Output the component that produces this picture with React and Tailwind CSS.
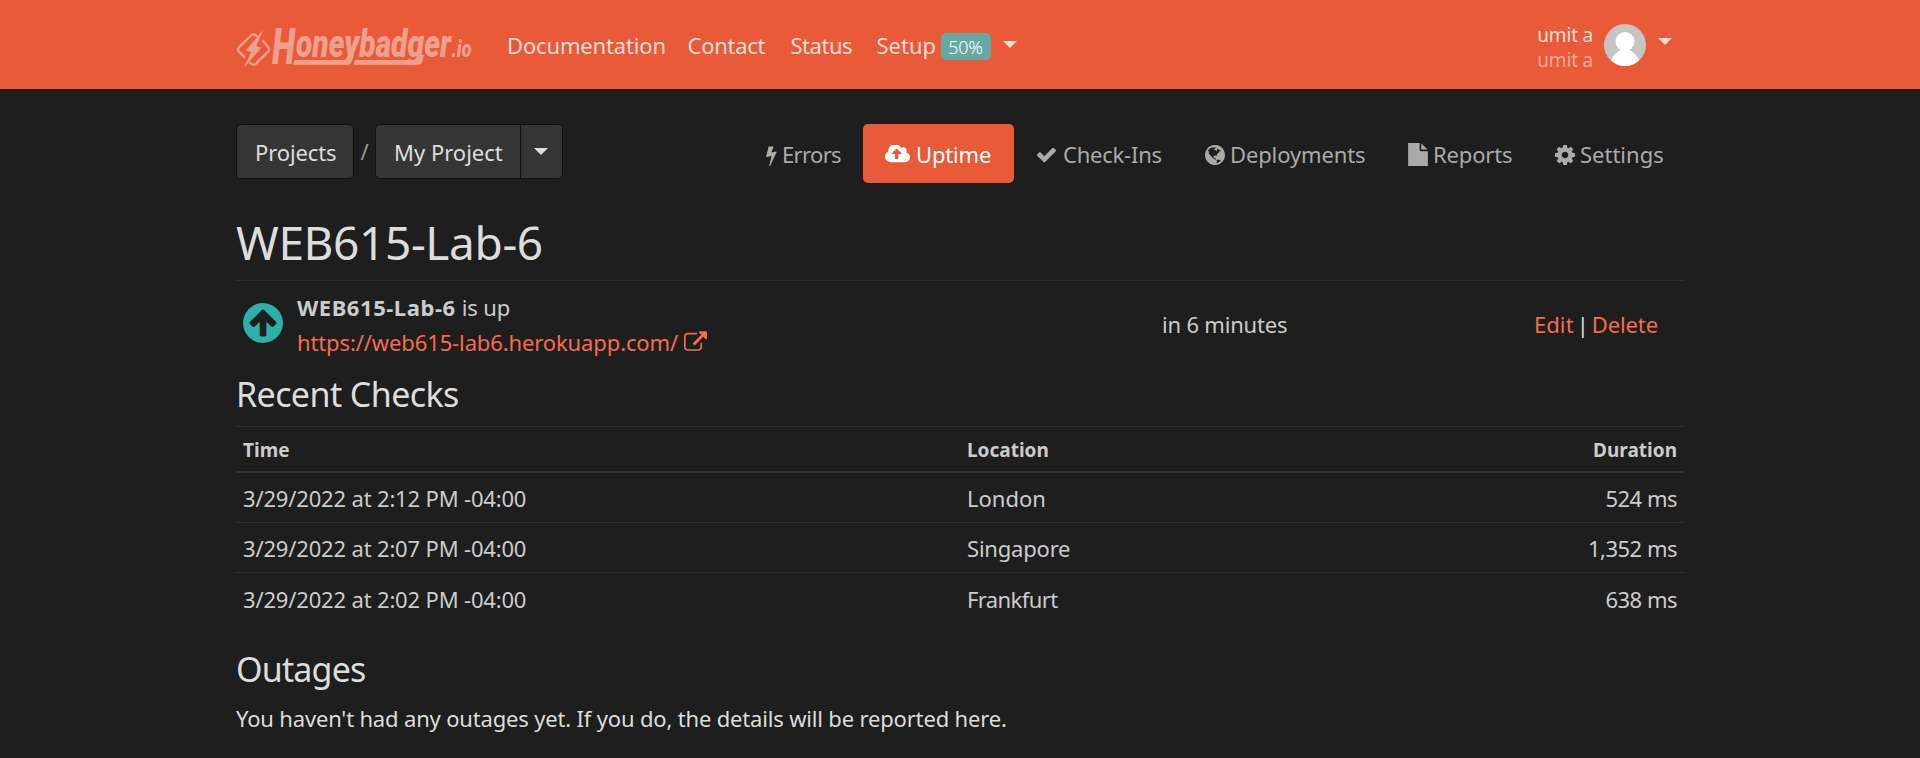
import React from "react";

const ICONS = {
  bolt: {
    box: "555 0 790 1792",
    d: "M1333 566q18 20 7 44l-540 1157q-13 25-42 25-4 0-14-2-17-5-25.5-19t-4.5-30l197-808-406 101q-4 1-12 1-18 0-31-11-18-15-13-39l201-825q4-16 18-26.5t32-10.5h328q19 0 32 12.5t13 29.5q0 8-5 18l-171 463 396-98q8-2 12-2 19 0 34 15z",
  },
  cloud: {
    box: "-64 256 1920 1280",
    d: "M1216 864q0-14-9-23l-352-352q-9-9-23-9t-23 9l-351 351q-10 12-10 24 0 14 9 23t23 9h224v352q0 13 9.5 22.5t22.5 9.5h192q13 0 22.5-9.5t9.5-22.5v-352h224q13 0 22.5-9.5t9.5-22.5zm640 288q0 159-112.5 271.5t-271.5 112.5h-1088q-185 0-316.5-131.5t-131.5-316.5q0-130 70-240t188-165q-2-30-2-43 0-212 150-362t362-150q156 0 285.5 87t188.5 231q71-62 166-62 106 0 181 75t75 181q0 76-41 138 130 31 213.5 135.5t83.5 238.5z",
  },
  check: {
    box: "120 370 1552 1190",
    d: "M1671 566q0 40-28 68l-724 724-136 136q-28 28-68 28t-68-28l-136-136-362-362q-28-28-28-68t28-68l136-136q28-28 68-28t68 28l294 295 656-657q28-28 68-28t68 28l136 136q28 28 28 68z",
  },
  globe: {
    box: "128 128 1536 1536",
    d: "M896 128q209 0 385.5 103t279.5 279.5 103 385.5-103 385.5-279.5 279.5-385.5 103-385.5-103-279.5-279.5-103-385.5 103-385.5 279.5-279.5 385.5-103zm274 521q-2 1-9.5 9.5t-13.5 9.5q2 0 4.5-5t5-11 3.5-7q6-7 22-15 14-6 52-12 34-8 51 11-2-2 9.5-13t14.5-12q3-2 15-4.5t15-7.5l2-22q-12 1-17.5-7t-6.5-21q0 2-6 8 0-7-4.5-8t-11.5 1-9 1q-10-3-15-7.5t-8-16.5-4-15q-2-5-9.5-11t-9.5-10q-1-2-2.5-5.5t-3-6.5-4-5.5-5.5-2.5-7 5-7.5 10-4.5 5q-3-2-6-1.5t-4.5 1-4.5 3-5 3.5q-3 2-8.5 3t-8.5 2q15-5-1-11-10-4-16-3 9-4 7.5-12t-8.5-14h5q-1-4-8.5-8.5t-17.5-8.5-13-6q-8-5-34-9.5t-33-.5q-5 6-4.5 10.5t4 14 3.5 12.5q1 6-5.5 13t-6.5 12q0 7 14 15.5t10 21.5q-3 8-16 16t-16 12q-5 8-1.5 18.5t10.5 16.5q2 2 1.5 4t-3.5 4.5-5.5 4-6.5 3.5l-3 2q-11 5-20.5-6t-13.5-26q-7-25-16-30-23-8-29 1-5-13-41-26-25-9-58-4 6-1 0-15-7-15-19-12 3-6 4-17.5t1-13.5q3-13 12-23 1-1 7-8.5t9.5-13.5.5-6q35 4 50-11 5-5 11.5-17t10.5-17q9-6 14-5.5t14.5 5.5 14.5 5q14 1 15.5-11t-7.5-20q12 1 3-17-4-7-8-9-12-4-27 5-8 4 2 8-1-1-9.5 10.5t-16.5 17.5-16-5q-1-1-5.5-13.5t-9.5-13.5q-8 0-16 15 3-8-11-15t-24-8q19-12-8-27-7-4-20.5-5t-19.5 4q-5 7-5.5 11.5t5 8 10.5 5.5 11.5 4 8.5 3q14 10 8 14-2 1-8.5 3.5t-11.5 4.5-6 4q-3 4 0 14t-2 14q-5-5-9-17.5t-7-16.5q7 9-25 6l-10-1q-4 0-16 2t-20.5 1-13.5-8q-4-8 0-20 1-4 4-2-4-3-11-9.5t-10-8.5q-46 15-94 41 6 1 12-1 5-2 13-6.5t10-5.5q34-14 42-7l5-5q14 16 20 25-7-4-30-1-20 6-22 12 7 12 5 18-4-3-11.5-10t-14.5-11-15-5q-16 0-22 1-146 80-235 222 7 7 12 8 4 1 5 9t2.5 11 11.5-3q9 8 3 19 1-1 44 27 19 17 21 21 3 11-10 18-1-2-9-9t-9-4q-3 5 .5 18.5t10.5 12.5q-7 0-9.5 16t-2.5 35.5-1 23.5l2 1q-3 12 5.5 34.5t21.5 19.5q-13 3 20 43 6 8 8 9 3 2 12 7.5t15 10 10 10.5q4 5 10 22.5t14 23.5q-2 6 9.5 20t10.5 23q-1 0-2.5 1t-2.5 1q3 7 15.5 14t15.5 13q1 3 2 10t3 11 8 2q2-20-24-62-15-25-17-29-3-5-5.5-15.5t-4.5-14.5q2 0 6 1.5t8.5 3.5 7.5 4 2 3q-3 7 2 17.5t12 18.5 17 19 12 13q6 6 14 19.5t0 13.5q9 0 20 10.5t17 19.5q5 8 8 26t5 24q2 7 8.5 13.5t12.5 9.5l16 8 13 7q5 2 18.5 10.5t21.5 11.5q10 4 16 4t14.5-2.5 13.5-3.5q15-2 29 15t21 21q36 19 55 11-2 1 .5 7.5t8 15.5 9 14.5 5.5 8.5q5 6 18 15t18 15q6-4 7-9-3 8 7 20t18 10q14-3 14-32-31 15-49-18 0-1-2.5-5.5t-4-8.5-2.5-8.5 0-7.5 5-3q9 0 10-3.5t-2-12.5-4-13q-1-8-11-20t-12-15q-5 9-16 8t-16-9q0 1-1.5 5.5t-1.5 6.5q-13 0-15-1 1-3 2.5-17.5t3.5-22.5q1-4 5.5-12t7.5-14.5 4-12.5-4.5-9.5-17.5-2.5q-19 1-26 20-1 3-3 10.5t-5 11.5-9 7q-7 3-24 2t-24-5q-13-8-22.5-29t-9.5-37q0-10 2.5-26.5t3-25-5.5-24.5q3-2 9-9.5t10-10.5q2-1 4.5-1.5t4.5 0 4-1.5 3-6q-1-1-4-3-3-3-4-3 7 3 28.5-1.5t27.5 1.5q15 11 22-2 0-1-2.5-9.5t-.5-13.5q5 27 29 9 3 3 15.5 5t17.5 5q3 2 7 5.5t5.5 4.5 5-.5 8.5-6.5q10 14 12 24 11 40 19 44 7 3 11 2t4.5-9.5 0-14-1.5-12.5l-1-8v-18l-1-8q-15-3-18.5-12t1.5-18.5 15-18.5q1-1 8-3.5t15.5-6.5 12.5-8q21-19 15-35 7 0 11-9-1 0-5-3t-7.5-5-4.5-2q9-5 2-16 5-3 7.5-11t7.5-10q9 12 21 2 7-8 1-16 5-7 20.5-10.5t18.5-9.5q7 2 8-2t1-12 3-12q4-5 15-9t13-5l17-11q3-4 0-4 18 2 31-11 10-11-6-20 3-6-3-9.5t-15-5.5q3-1 11.5-.5t10.5-1.5q15-10-7-16-17-5-43 12zm-163 877q206-36 351-189-3-3-12.5-4.5t-12.5-3.5q-18-7-24-8 1-7-2.5-13t-8-9-12.5-8-11-7q-2-2-7-6t-7-5.5-7.5-4.5-8.5-2-10 1l-3 1q-3 1-5.5 2.5t-5.5 3-4 3 0 2.5q-21-17-36-22-5-1-11-5.5t-10.5-7-10-1.5-11.5 7q-5 5-6 15t-2 13q-7-5 0-17.5t2-18.5q-3-6-10.5-4.5t-12 4.5-11.5 8.5-9 6.5-8.5 5.5-8.5 7.5q-3 4-6 12t-5 11q-2-4-11.5-6.5t-9.5-5.5q2 10 4 35t5 38q7 31-12 48-27 25-29 40-4 22 12 26 0 7-8 20.5t-7 21.5q0 6 2 16z",
  },
  file: {
    box: "128 0 1536 1792",
    d: "M1152 512v-472q22 14 36 28l408 408q14 14 28 36h-472zm-128 32q0 40 28 68t68 28h544v1152h-1536v-1792h896v544z",
  },
  cog: {
    box: "128 128 1536 1536",
    d: "M1152 896q0-106-75-181t-181-75-181 75-75 181 75 181 181 75 181-75 75-181zm512-109v222q0 12-8 23t-20 13l-185 28q-19 54-39 91 35 50 107 138 10 12 10 25t-9 23q-27 37-99 108t-94 71q-12 0-26-9l-138-108q-44 23-91 38-16 136-29 186-7 28-36 28h-222q-14 0-24.5-8.5t-11.5-21.5l-28-184q-49-16-90-37l-141 107q-10 9-25 9-14 0-25-11-126-114-165-168-7-10-7-23 0-12 8-23 15-21 51-66.5t54-70.5q-27-50-41-99l-183-27q-13-2-21-12.5t-8-23.5v-222q0-12 8-23t19-13l186-28q14-46 39-92-40-57-107-138-10-12-10-24 0-10 9-23 26-36 98.5-107.5t94.5-71.5q13 0 26 10l138 107q44-23 91-38 16-136 29-186 7-28 36-28h222q14 0 24.5 8.5t11.5 21.5l28 184q49 16 90 37l142-107q9-9 24-9 13 0 25 10 129 119 165 170 7 8 7 22 0 12-8 23-15 21-51 66.5t-54 70.5q26 50 41 98l183 28q13 2 21 12.5t8 23.5z",
  },
  up: {
    box: "128 128 1536 1536",
    d: "M1412 897q0-27-18-45l-362-362-91-91q-18-18-45-18t-45 18l-91 91-362 362q-18 18-18 45t18 45l91 91q18 18 45 18t45-18l189-189v502q0 26 19 45t45 19h128q26 0 45-19t19-45v-502l189 189q19 19 45 19t45-19l91-91q18-18 18-45zm252-1q0 209-103 385.5t-279.5 279.5-385.5 103-385.5-103-279.5-279.5-103-385.5 103-385.5 279.5-279.5 385.5-103 385.5 103 279.5 279.5 103 385.5z",
  },
  external: {
    box: "0 0 1792 1536",
    d: "M1408 928v320q0 119-84.5 203.5t-203.5 84.5h-832q-119 0-203.5-84.5t-84.5-203.5v-832q0-119 84.5-203.5t203.5-84.5h704q14 0 23 9t9 23v64q0 14-9 23t-23 9h-704q-66 0-113 47t-47 113v832q0 66 47 113t113 47h832q66 0 113-47t47-113v-320q0-14 9-23t23-9h64q14 0 23 9t9 23zm384-864v512q0 26-19 45t-45 19-45-19l-176-176-652 652q-10 10-23 10t-23-10l-114-114q-10-10-10-23t10-23l652-652-176-176q-19-19-19-45t19-45 45-19h512q26 0 45 19t19 45z",
  },
};

function Icon({ name, className }) {
  const { box, d } = ICONS[name];
  return (
    <svg viewBox={box} className={`shrink-0 fill-current ${className}`} aria-hidden="true">
      <path fillRule="evenodd" d={d} />
    </svg>
  );
}

function Caret({ className }) {
  return (
    <svg viewBox="0 0 14 7" className={`h-[7px] w-[14px] shrink-0 fill-current ${className}`} aria-hidden="true">
      <path d="M0 0h14L7 7z" />
    </svg>
  );
}

function Logo() {
  return (
    <svg viewBox="0 0 240 44" className="h-[44px] w-[240px] shrink-0 overflow-visible text-[#eca18e]" aria-label="Honeybadger.io">
      <g fill="none" stroke="currentColor" strokeWidth="2.3" strokeLinejoin="round">
        <path d="M21.5 9.6L19.5 8Q17.6 6.6 15.6 8L3 20.2Q1 22.4 3 24.6L9 30.6" />
        <path d="M26.5 13.2L32.2 20Q34 22.4 32.2 24.6L20 36.6Q17.6 38.8 15.6 37L13.4 35.4" />
      </g>
      <path fill="currentColor" d="M27.5 2.5L9.8 23.5L15 25.2L8 40.5L25.5 20.8L20.2 19z" />
      <g
        fill="currentColor"
        fontFamily='"Roboto", "Liberation Sans", sans-serif'
        fontWeight="900"
        fontStyle="italic"
      >
        <text x="36" y="37" fontSize="49" textLength="23" lengthAdjust="spacingAndGlyphs">H</text>
        <text x="60" y="30" fontSize="38" textLength="155" lengthAdjust="spacingAndGlyphs">oneybadger</text>
        <text x="215.5" y="30" fontSize="23" textLength="20" lengthAdjust="spacingAndGlyphs">.io</text>
      </g>
      <path fill="currentColor" d="M58.5 33H109L112.5 28H118L115.5 35Q114.5 37.8 111 37.8H57z" />
      <path fill="currentColor" d="M119 33H180L182.5 28H188L186.5 34.5Q185.5 37.8 182 37.8H117.5z" />
    </svg>
  );
}

function Header() {
  return (
    <header className="h-[89px] bg-[#e95a39]">
      <div className="mx-auto flex w-[1448px] items-start text-[#fbded7]">
        <div className="w-[270.5px] shrink-0 pt-[27px]">
          <Logo />
        </div>
        <nav className="flex items-start pt-[29px]">
          <a className="w-[181px] pl-[0.5px] tracking-[-0.15px]">Documentation</a>
          <a className="w-[103px] tracking-[-0.27px]">Contact</a>
          <a className="w-[86px] tracking-[-0.46px]">Status</a>
          <a className="w-[64px]">Setup</a>
          <span className="mt-[4px] h-[27px] w-[50px] rounded-[5px] bg-[#66a8a4] text-center text-[18px] leading-[28px] font-light tracking-[-0.2px] text-white">
            50%
          </span>
          <Caret className="mt-[12px] ml-[12px]" />
        </nav>
        <div className="ml-auto flex items-start pr-[12px]">
          <div className="pt-[23px] text-[19px] leading-[25px] tracking-[-0.2px]">
            <div>umit a</div>
            <div className="text-[#f4ac9b]">umit a</div>
          </div>
          <svg viewBox="0 0 42 42" className="mt-[24px] ml-[11px] h-[42px] w-[42px] rounded-full" aria-hidden="true">
            <rect width="42" height="42" fill="#c5c5c5" />
            <circle cx="21" cy="17.5" r="9.5" fill="#fff" />
            <path d="M5.5 42Q7 31 16.5 26h9Q35 31 36.5 42z" fill="#fff" />
          </svg>
          <Caret className="mt-[38px] ml-[12px]" />
        </div>
      </div>
    </header>
  );
}

function Toolbar() {
  return (
    <div className="flex h-[59px] items-start">
      <a className="h-[55px] w-[118px] rounded-[5px] border border-[#111] bg-[#353535] pt-[11px] pl-[18px] tracking-[-0.12px] text-[#dedede]">
        Projects
      </a>
      <span className="w-[21px] pt-[11px] text-center text-[#999]">/</span>
      <div className="flex h-[55px] w-[188px] rounded-[5px] border border-[#111] bg-[#353535] text-[#dedede]">
        <a className="w-[145px] border-r border-[#111] pt-[11px] pl-[18px]">My Project</a>
        <Caret className="mt-[23px] ml-[13px]" />
      </div>
      <nav className="mr-[22px] ml-auto flex h-[59px] items-center text-[#aaa]">
        <a className="flex w-[97px] items-center">
          <Icon name="bolt" className="mt-[3px] h-[21px] w-[12px]" />
          <span className="ml-[4px] pt-[2px] tracking-[-0.65px]">Errors</span>
        </a>
        <a className="flex h-[59px] w-[151px] items-center rounded-[5px] bg-[#e95a39] pl-[22px] text-white">
          <Icon name="cloud" className="h-[18px] w-[25px]" />
          <span className="ml-[6px] pt-[2px] tracking-[-0.16px]">Uptime</span>
        </a>
        <a className="flex w-[168px] items-center pl-[23px]">
          <Icon name="check" className="mt-[3px] h-[15px] w-[19px]" />
          <span className="ml-[7px] pt-[2px] tracking-[-0.23px]">Check-Ins</span>
        </a>
        <a className="flex w-[203px] items-center pl-[23px]">
          <Icon name="globe" className="mt-[2px] h-[20px] w-[20px]" />
          <span className="ml-[5px] pt-[2px] tracking-[-0.13px]">Deployments</span>
        </a>
        <a className="flex w-[147px] items-center pl-[23px]">
          <Icon name="file" className="mt-[1px] h-[23px] w-[20px]" />
          <span className="ml-[5px] pt-[2px] tracking-[-0.16px]">Reports</span>
        </a>
        <a className="flex w-[130px] items-center pl-[23px]">
          <Icon name="cog" className="mt-[2px] h-[20px] w-[20px]" />
          <span className="ml-[5px] pt-[2px]">Settings</span>
        </a>
      </nav>
    </div>
  );
}

function SiteStatus() {
  return (
    <section className="mt-[10px] flex h-[79px] items-start border-t border-[#2f2f2f] text-[#ccc]">
      <Icon name="up" className="mt-[22px] ml-[7px] h-[40px] w-[40px] text-[#2cb0a8]" />
      <div className="ml-[14px] w-[865px] pt-[9px] leading-[34.5px]">
        <div className="flex">
          <strong className="tracking-[0.55px]">WEB615-Lab-6</strong>
          <span className="ml-[6px] tracking-[-0.1px]">is up</span>
        </div>
        <a className="flex text-[#f76c4b]">
          <span className="tracking-[-0.12px]">https://web615-lab6.herokuapp.com/</span>
          <Icon name="external" className="mt-[6px] ml-[6px] h-[20px] w-[23px]" />
        </a>
      </div>
      <span className="pt-[27px] tracking-[-0.19px]">in 6 minutes</span>
      <div className="ml-auto flex pt-[27px] pr-[26px]">
        <a className="tracking-[0.1px] text-[#f76c4b]">Edit</a>
        <span className="w-[18px] text-center text-[#ddd]">|</span>
        <a className="tracking-[-0.1px] text-[#f76c4b]">Delete</a>
      </div>
    </section>
  );
}

const CHECKS = [
  { time: "3/29/2022 at 2:12 PM -04:00", location: "London", duration: "524 ms", row: "h-[49px]", track: "" },
  { time: "3/29/2022 at 2:07 PM -04:00", location: "Singapore", duration: "1,352 ms", row: "h-[50px] border-t", track: "tracking-[-0.2px]" },
  { time: "3/29/2022 at 2:02 PM -04:00", location: "Frankfurt", duration: "638 ms", row: "h-[52px] border-t", track: "tracking-[-0.6px]" },
];

function ChecksTable() {
  return (
    <div className="mt-[11px] text-[#ccc]">
      <div className="flex h-[47px] items-center border-t border-b-2 border-t-[#2f2f2f] border-b-[#353535] pt-[2px] pr-[7px] pl-[7px] text-[19px] font-bold">
        <span className="w-[724px]">Time</span>
        <span>Location</span>
        <span className="ml-auto">Duration</span>
      </div>
      {CHECKS.map((c) => (
        <div key={c.time} className={`flex items-center border-[#2f2f2f] pt-[2px] pr-[7px] pl-[7px] ${c.row}`}>
          <span className="w-[724px] tracking-[-0.17px]">{c.time}</span>
          <span className={c.track}>{c.location}</span>
          <span className="ml-auto tracking-[-0.5px]">{c.duration}</span>
        </div>
      ))}
    </div>
  );
}

export default function App() {
  return (
    <div className="h-[758px] w-[1920px] overflow-hidden bg-[#1e1e1e] font-['Noto_Sans','Open_Sans',sans-serif] text-[22px] leading-[33px] whitespace-nowrap text-[#ddd]">
      <Header />
      <main className="mx-auto w-[1448px] pt-[35px]">
        <Toolbar />
        <h1 className="mt-[32px] text-[46px] leading-[55px] tracking-[-0.38px]">WEB615-Lab-6</h1>
        <SiteStatus />
        <h2 className="mt-[15px] text-[34px] leading-[41px] tracking-[-0.59px]">Recent Checks</h2>
        <ChecksTable />
        <h2 className="mt-[25px] text-[34px] leading-[41px] tracking-[-0.83px]">Outages</h2>
        <p className="mt-[12px] tracking-[-0.17px]">
          You haven't had any outages yet. If you do, the details will be reported here.
        </p>
      </main>
    </div>
  );
}
